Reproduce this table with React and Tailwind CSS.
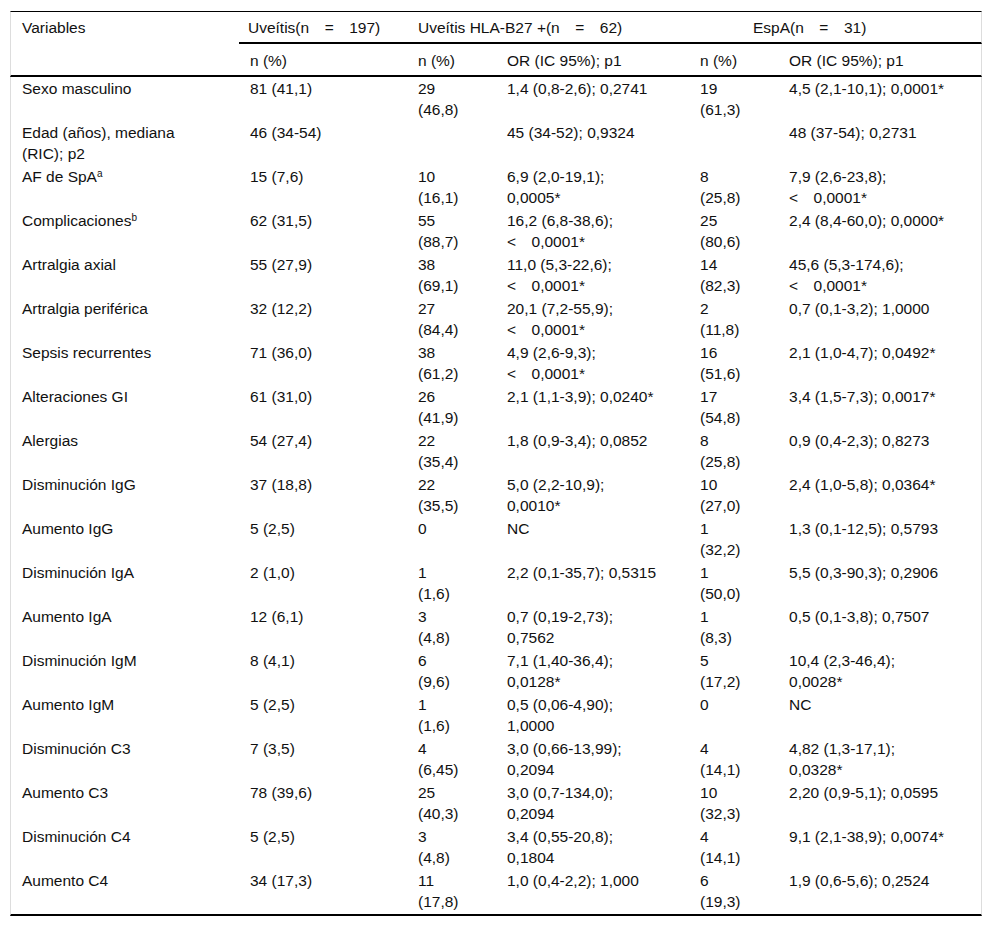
import React from "react";

const E = "\u2003";

const rows = [
  ["Sexo masculino", "81 (41,1)", ["29", "(46,8)"], ["1,4 (0,8-2,6); 0,2741"], ["19", "(61,3)"], ["4,5 (2,1-10,1); 0,0001*"]],
  [["Edad (años), mediana", "(RIC); p2"], "46 (34-54)", [], ["45 (34-52); 0,9324"], [], ["48 (37-54); 0,2731"]],
  [<>AF de SpA<sup className="text-[10px]">a</sup></>, "15 (7,6)", ["10", "(16,1)"], ["6,9 (2,0-19,1);", "0,0005*"], ["8", "(25,8)"], ["7,9 (2,6-23,8);", `<${E}0,0001*`]],
  [<>Complicaciones<sup className="text-[10px]">b</sup></>, "62 (31,5)", ["55", "(88,7)"], ["16,2 (6,8-38,6);", `<${E}0,0001*`], ["25", "(80,6)"], ["2,4 (8,4-60,0); 0,0000*"]],
  ["Artralgia axial", "55 (27,9)", ["38", "(69,1)"], ["11,0 (5,3-22,6);", `<${E}0,0001*`], ["14", "(82,3)"], ["45,6 (5,3-174,6);", `<${E}0,0001*`]],
  ["Artralgia periférica", "32 (12,2)", ["27", "(84,4)"], ["20,1 (7,2-55,9);", `<${E}0,0001*`], ["2", "(11,8)"], ["0,7 (0,1-3,2); 1,0000"]],
  ["Sepsis recurrentes", "71 (36,0)", ["38", "(61,2)"], ["4,9 (2,6-9,3);", `<${E}0,0001*`], ["16", "(51,6)"], ["2,1 (1,0-4,7); 0,0492*"]],
  ["Alteraciones GI", "61 (31,0)", ["26", "(41,9)"], ["2,1 (1,1-3,9); 0,0240*"], ["17", "(54,8)"], ["3,4 (1,5-7,3); 0,0017*"]],
  ["Alergias", "54 (27,4)", ["22", "(35,4)"], ["1,8 (0,9-3,4); 0,0852"], ["8", "(25,8)"], ["0,9 (0,4-2,3); 0,8273"]],
  ["Disminución IgG", "37 (18,8)", ["22", "(35,5)"], ["5,0 (2,2-10,9);", "0,0010*"], ["10", "(27,0)"], ["2,4 (1,0-5,8); 0,0364*"]],
  ["Aumento IgG", "5 (2,5)", ["0"], ["NC"], ["1", "(32,2)"], ["1,3 (0,1-12,5); 0,5793"]],
  ["Disminución IgA", "2 (1,0)", ["1", "(1,6)"], ["2,2 (0,1-35,7); 0,5315"], ["1", "(50,0)"], ["5,5 (0,3-90,3); 0,2906"]],
  ["Aumento IgA", "12 (6,1)", ["3", "(4,8)"], ["0,7 (0,19-2,73);", "0,7562"], ["1", "(8,3)"], ["0,5 (0,1-3,8); 0,7507"]],
  ["Disminución IgM", "8 (4,1)", ["6", "(9,6)"], ["7,1 (1,40-36,4);", "0,0128*"], ["5", "(17,2)"], ["10,4 (2,3-46,4);", "0,0028*"]],
  ["Aumento IgM", "5 (2,5)", ["1", "(1,6)"], ["0,5 (0,06-4,90);", "1,0000"], ["0"], ["NC"]],
  ["Disminución C3", "7 (3,5)", ["4", "(6,45)"], ["3,0 (0,66-13,99);", "0,2094"], ["4", "(14,1)"], ["4,82 (1,3-17,1);", "0,0328*"]],
  ["Aumento C3", "78 (39,6)", ["25", "(40,3)"], ["3,0 (0,7-134,0);", "0,2094"], ["10", "(32,3)"], ["2,20 (0,9-5,1); 0,0595"]],
  ["Disminución C4", "5 (2,5)", ["3", "(4,8)"], ["3,4 (0,55-20,8);", "0,1804"], ["4", "(14,1)"], ["9,1 (2,1-38,9); 0,0074*"]],
  ["Aumento C4", "34 (17,3)", ["11", "(17,8)"], ["1,0 (0,4-2,2); 1,000"], ["6", "(19,3)"], ["1,9 (0,6-5,6); 0,2524"]],
];

function Lines({ v }) {
  if (!Array.isArray(v)) return v;
  return v.map((l, i) => (
    <React.Fragment key={i}>
      {i > 0 && <br />}
      {l}
    </React.Fragment>
  ));
}

export default function App() {
  const td = "pl-[11px] py-px align-top whitespace-pre";
  return (
    <div className="min-h-screen bg-white pl-[10px] pt-[11px] font-['Liberation_Sans',Arial,sans-serif] text-[15.5px] leading-[21px] text-[#111]">
      <table className="w-[972px] table-fixed border-separate border-spacing-0 text-left">
        <colgroup>
          <col className="w-[229px]" />
          <col className="w-[168px]" />
          <col className="w-[89px]" />
          <col className="w-[193px]" />
          <col className="w-[89px]" />
          <col className="w-[204px]" />
        </colgroup>
        <thead>
          <tr>
            <th rowSpan={2} className="border-t border-l border-t-black border-l-[#ddd] border-b-2 border-b-black pl-[11px] pt-[5px] align-top font-normal">
              Variables
            </th>
            <th className="border-t border-t-black border-b-2 border-b-black pl-[9px] pt-[5px] pb-[4px] align-top font-normal whitespace-pre">
              {`Uveítis(n${E}=${E}197)`}
            </th>
            <th colSpan={2} className="border-t border-t-black border-b-2 border-b-black pl-[11px] pt-[5px] pb-[4px] align-top font-normal whitespace-pre">
              {`Uveítis HLA-B27 +(n${E}=${E}62)`}
            </th>
            <th colSpan={2} className="border-t border-r border-t-black border-r-[#ddd] border-b-2 border-b-black pl-[64px] pt-[5px] pb-[4px] align-top font-normal whitespace-pre">
              {`EspA(n${E}=${E}31)`}
            </th>
          </tr>
          <tr>
            <th className="border-b-2 border-b-black pl-[11px] pt-[6px] pb-[4px] align-top font-normal">n (%)</th>
            <th className="border-b-2 border-b-black pl-[11px] pt-[6px] pb-[4px] align-top font-normal">n (%)</th>
            <th className="border-b-2 border-b-black pl-[11px] pt-[6px] pb-[4px] align-top font-normal">OR (IC 95%); p1</th>
            <th className="border-b-2 border-b-black pl-[11px] pt-[6px] pb-[4px] align-top font-normal">n (%)</th>
            <th className="border-b-2 border-r border-b-black border-r-[#ddd] pl-[11px] pt-[6px] pb-[4px] align-top font-normal">OR (IC 95%); p1</th>
          </tr>
        </thead>
        <tbody>
          {rows.map((r, i) => {
            const last = i === rows.length - 1;
            const bb = last ? " border-b-2 border-b-black pb-[2px]" : "";
            return (
              <tr key={i} className="h-[44px]">
                <td className={`${td} border-l border-l-[#ddd]${bb}`}><Lines v={r[0]} /></td>
                <td className={`${td}${bb}`}><Lines v={r[1]} /></td>
                <td className={`${td}${bb}`}><Lines v={r[2]} /></td>
                <td className={`${td}${bb}`}><Lines v={r[3]} /></td>
                <td className={`${td}${bb}`}><Lines v={r[4]} /></td>
                <td className={`${td} border-r border-r-[#ddd]${bb}`}><Lines v={r[5]} /></td>
              </tr>
            );
          })}
        </tbody>
      </table>
    </div>
  );
}
